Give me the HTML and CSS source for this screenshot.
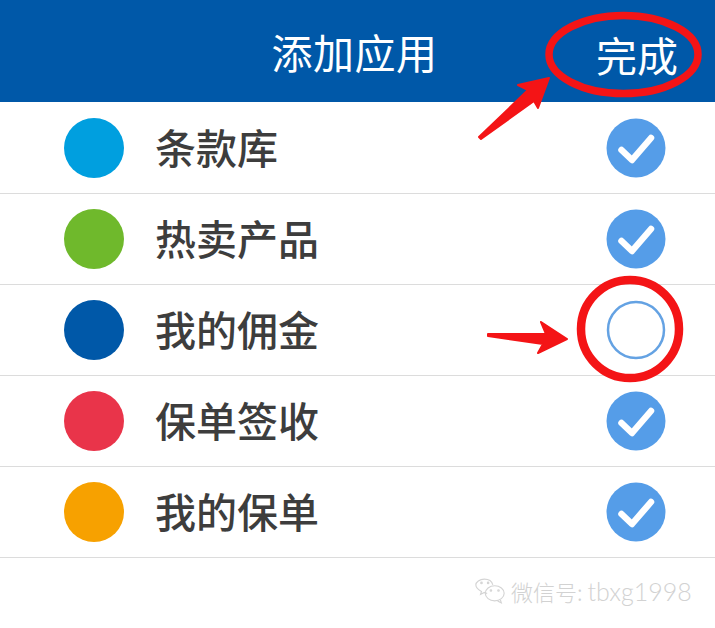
FILE: index.html
```html
<!DOCTYPE html>
<html lang="zh">
<head>
<meta charset="utf-8">
<title>添加应用</title>
<link rel="stylesheet" href="styles.css">
</head>
<body>
<div class="page">
  <header class="bar">
    <div class="bar-title">添加应用</div>
    <div class="bar-action">完成</div>
  </header>
  <ul class="list">
    <li class="row">
      <span class="dot dot-sky"></span><span class="label">条款库</span>
      <svg class="check" viewBox="0 0 60 60"><circle cx="30" cy="30" r="29.5" fill="#559de8"/><path d="M15.5 32l10.5 10L45 20" fill="none" stroke="#fff" stroke-width="6.5" stroke-linecap="round" stroke-linejoin="round"/></svg>
    </li>
    <li class="row">
      <span class="dot dot-green"></span><span class="label">热卖产品</span>
      <svg class="check" viewBox="0 0 60 60"><circle cx="30" cy="30" r="29.5" fill="#559de8"/><path d="M15.5 32l10.5 10L45 20" fill="none" stroke="#fff" stroke-width="6.5" stroke-linecap="round" stroke-linejoin="round"/></svg>
    </li>
    <li class="row">
      <span class="dot dot-blue"></span><span class="label">我的佣金</span>
      <svg class="check" viewBox="0 0 60 60"><circle cx="30" cy="30" r="28" fill="#fff" stroke="#64a2e3" stroke-width="2.5"/></svg>
    </li>
    <li class="row">
      <span class="dot dot-red"></span><span class="label">保单签收</span>
      <svg class="check" viewBox="0 0 60 60"><circle cx="30" cy="30" r="29.5" fill="#559de8"/><path d="M15.5 32l10.5 10L45 20" fill="none" stroke="#fff" stroke-width="6.5" stroke-linecap="round" stroke-linejoin="round"/></svg>
    </li>
    <li class="row">
      <span class="dot dot-orange"></span><span class="label">我的保单</span>
      <svg class="check" viewBox="0 0 60 60"><circle cx="30" cy="30" r="29.5" fill="#559de8"/><path d="M15.5 32l10.5 10L45 20" fill="none" stroke="#fff" stroke-width="6.5" stroke-linecap="round" stroke-linejoin="round"/></svg>
    </li>
  </ul>
  <footer class="mark">
    <svg class="mark-icon" viewBox="0 0 36 28" fill="none" stroke="#d4d4d4" stroke-width="1.2"><path d="M15 17c-1 0-2 0-3-1l-4 2 1-3c-4-2-6-5-6-7 0-3 4-6 9-6s8 2 9 6"/><ellipse cx="23" cy="17" rx="10" ry="8"/><path d="M29 24l1 3-4-2"/><circle cx="19" cy="14" r=".8"/><circle cx="27" cy="14" r=".8"/><circle cx="9" cy="6" r=".8"/><circle cx="16" cy="6" r=".8"/></svg>
    <span class="mark-text">微信号:</span><span class="mark-id">tbxg1998</span>
  </footer>
  <svg class="notes" viewBox="0 0 715 628" aria-hidden="true">
    <ellipse cx="623.5" cy="54.5" rx="74.5" ry="39" fill="none" stroke="#f41416" stroke-width="7.5"/>
    <path d="M479 137L528 90 518 85 549 78 538 108 534 101 481 139Z" fill="#f41416" stroke="#f41416" stroke-width="2" stroke-linejoin="round"/>
    <circle cx="630" cy="329" r="49" fill="none" stroke="#f41416" stroke-width="8.5"/>
    <path d="M488 334L546 334 541 322 567 339 538 353 543 344 488 336Z" fill="#f41416" stroke="#f41416" stroke-width="2" stroke-linejoin="round"/>
  </svg>
</div>
</body>
</html>
```
FILE: styles.css
```css
* { box-sizing: border-box; }
html, body { margin: 0; padding: 0; background: #fff; }
body { font-family: "Noto Sans CJK SC", "Noto Sans", sans-serif; }
.page { position: relative; width: 715px; height: 628px; overflow: hidden; background: #fff; }
.bar { position: relative; display: flex; align-items: center; justify-content: center; height: 102px; padding-top: 1px; background: #0058a8; color: #fff; font-size: 41px; line-height: 1; }
.bar-title { margin-left: -6px; letter-spacing: 0.5px; }
.bar-action { position: absolute; right: 37px; top: 34px; }
.list { list-style: none; margin: 0; padding: 0.5px 0 0; }
.row { display: flex; align-items: center; height: 91.1px; padding: 0 49px 0 64px; border-bottom: 1px solid #dcdcdc; }
.row .dot { flex: none; width: 60px; height: 60px; border-radius: 50%; }
.dot-sky { background: #009fdf; }
.dot-green { background: #6fb92c; }
.dot-blue { background: #0058a8; }
.dot-red { background: #e9344a; }
.dot-orange { background: #f7a100; }
.label { flex: 1; margin-left: 31px; margin-bottom: 3px; font-size: 41px; line-height: 1; font-weight: 500; color: #3d3d3d; }
.check { flex: none; width: 60px; height: 60px; }
.mark { display: flex; align-items: center; padding: 18px 0 0 473px; color: #d2d2d2; }
.mark-icon { width: 34px; height: 27px; flex: none; margin-right: 4px; }
.mark-text { font-size: 22px; line-height: 30px; font-weight: 300; white-space: nowrap; }
.mark-id { margin-left: 5px; font-family: "Lato", sans-serif; font-size: 25px; line-height: 30px; font-weight: 300; white-space: nowrap; }
.notes { position: absolute; left: 0; top: 0; width: 715px; height: 628px; pointer-events: none; }
```
